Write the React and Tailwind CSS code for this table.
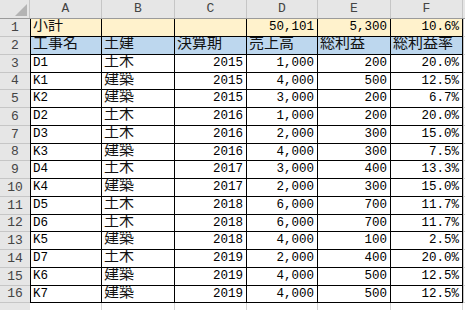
const cols = [
    { key: "A", w: "w-[72px]", align: "left" },
    { key: "B", w: "w-[73px]", align: "left" },
    { key: "C", w: "w-[72px]", align: "right" },
    { key: "D", w: "w-[71px]", align: "right" },
    { key: "E", w: "w-[73px]", align: "right" },
    { key: "F", w: "w-[72px]", align: "right" },
];

const rows = [
    ["小計", "", "", "50,101", "5,300", "10.6%"],
    ["工事名", "土建", "決算期", "売上高", "総利益", "総利益率"],
    ["D1", "土木", "2015", "1,000", "200", "20.0%"],
    ["K1", "建築", "2015", "4,000", "500", "12.5%"],
    ["K2", "建築", "2015", "3,000", "200", "6.7%"],
    ["D2", "土木", "2016", "1,000", "200", "20.0%"],
    ["D3", "土木", "2016", "2,000", "300", "15.0%"],
    ["K3", "建築", "2016", "4,000", "300", "7.5%"],
    ["D4", "土木", "2017", "3,000", "400", "13.3%"],
    ["K4", "建築", "2017", "2,000", "300", "15.0%"],
    ["D5", "土木", "2018", "6,000", "700", "11.7%"],
    ["D6", "土木", "2018", "6,000", "700", "11.7%"],
    ["K5", "建築", "2018", "4,000", "100", "2.5%"],
    ["D7", "土木", "2019", "2,000", "400", "20.0%"],
    ["K6", "建築", "2019", "4,000", "500", "12.5%"],
    ["K7", "建築", "2019", "4,000", "500", "12.5%"],
];

const isCJK = (s) => /[\u3000-\u9fff]/.test(s);

function Cell({ col, value, rowIndex, first }) {
    const bg =
        rowIndex === 0 ? "bg-[#fff2cc]" : rowIndex === 1 ? "bg-[#bdd7ee]" : "bg-white";
    const align = rowIndex === 1 || col.align === "left" ? "justify-start pl-[2px]" : "justify-end pr-[3px]";
    const size = isCJK(value) ? "text-[15px] text-[#111]" : "text-[12.5px]";

    return (
        <div
            className={`${col.w} h-full shrink-0 flex items-center border-r border-b border-black ${first ? "border-l" : ""} ${bg} ${align} ${size} overflow-hidden whitespace-nowrap`}
        >
            {value}
        </div>
    );
}

export default function App() {
    return (
        <div className="w-[465px] h-[310px] overflow-hidden bg-white text-black font-['Liberation_Mono','Noto_Sans_CJK_JP',monospace]">

            {/* Column header */}

            <div className="flex h-[19px] bg-[#e6e6e6] border-b border-[#9b9b9b]">
                <div className="w-[30px] h-full shrink-0 border-r border-[#c6c6c6] relative">
                    <svg className="absolute right-[2px] bottom-[2px]" width="12" height="12" viewBox="0 0 12 12">
                        <polygon points="12,0 12,12 0,12" fill="#b4b4b4" />
                    </svg>
                </div>
                {cols.map((c) => (
                    <div
                        key={c.key}
                        className={`${c.w} h-full shrink-0 flex items-center justify-center border-r border-[#c6c6c6] text-[13px] text-[#444]`}
                    >
                        {c.key}
                    </div>
                ))}
                <div className="flex-1" />
            </div>

            {/* Rows */}

            {rows.map((r, i) => (
                <div key={i} className={`flex ${i % 4 === 3 ? "h-[17px]" : "h-[18px]"}`}>
                    <div className="w-[30px] h-full shrink-0 flex items-center justify-center bg-[#e6e6e6] border-b border-[#c6c6c6] text-[13px] text-[#444]">
                        {i + 1}
                    </div>
                    {cols.map((c, j) => (
                        <Cell key={c.key} col={c} value={r[j]} rowIndex={i} first={j === 0} />
                    ))}
                    <div className="flex-1 border-b border-[#d4d4d4] border-l border-l-[#c6c6c6]" />
                </div>
            ))}

            <div className="flex h-[18px]">
                <div className="w-[30px] h-full shrink-0 bg-[#e6e6e6]" />
                {cols.map((c) => (
                    <div key={c.key} className={`${c.w} h-full shrink-0 border-r border-[#d4d4d4]`} />
                ))}
            </div>

        </div>
    );
}
